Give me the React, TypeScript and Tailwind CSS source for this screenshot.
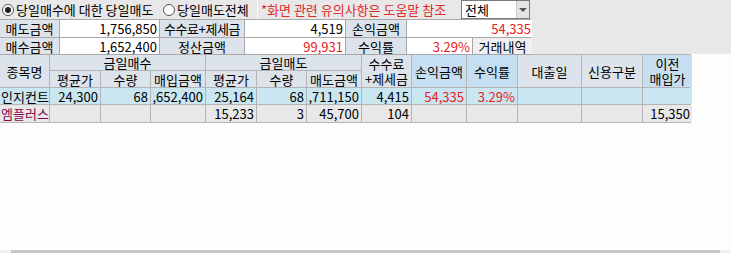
import React from "react";

const F = { fontFamily: '"Noto Sans CJK KR", "Noto Sans", sans-serif' };

function Radio({ checked, label }: { checked?: boolean; label: string }) {
  return (
    <div className="flex items-center gap-[2px] h-full">
      <span className="w-[12px] h-[12px] rounded-full border border-[#555] bg-white flex items-center justify-center shrink-0">
        {checked && <span className="w-[6px] h-[6px] rounded-full bg-[#222]" />}
      </span>
      <span className="text-[13px] leading-none text-black whitespace-nowrap">{label}</span>
    </div>
  );
}

const headBase = "bg-[#dce3eb] flex items-center justify-center text-[13px] leading-[15px] text-black text-center whitespace-nowrap";
const headBlue = "bg-[#c6def1] flex items-center justify-center text-[13px] leading-[15px] text-black text-center whitespace-nowrap";
const c1 = "bg-[#c9e6f1] flex items-center justify-end pr-[2px] whitespace-nowrap overflow-hidden";
const c2 = "bg-[#e8e8e8] flex items-center justify-end pr-[2px] whitespace-nowrap overflow-hidden";

export default function App() {
  return (
    <div style={F} className="w-[731px] h-[253px] bg-[#fdfdfe] relative overflow-hidden">
      {/* top area */}
      <div className="bg-[#e8e8e8] h-[54px] flex flex-col">
        <div className="h-[19px] flex items-center">
          <div className="w-[163px] pl-[2px] h-full"><Radio checked label="당일매수에 대한 당일매도" /></div>
          <div className="w-[94px] h-full"><Radio label="당일매도전체" /></div>
          <div className="w-[204px] h-[19px] border-l border-white flex items-center pl-[3px] text-[13px] text-[#e02a2a] leading-none whitespace-nowrap">
            *화면 관련 유의사항은 도움말 참조
          </div>
          <div className="w-[69px] h-[19px] border border-[#7a7a7a] bg-white flex">
            <div className="flex-1 flex items-center pl-[3px] text-[13px] leading-none">전체</div>
            <div className="w-[13px] bg-[#e4e4e4] border-l border-[#c8c8c8] flex items-center justify-center">
              <span className="w-0 h-0 border-l-[4px] border-r-[4px] border-t-[4px] border-l-transparent border-r-transparent border-t-[#555]" />
            </div>
          </div>
        </div>
        <div className="w-[531px] border-t border-[#a8a8a8] grid grid-cols-[59px_99px_84px_100px_60px_125px] gap-x-px gap-y-px bg-[#a8a8a8] pr-px pb-px text-[13px] leading-none">
          <div className={headBase + " h-[17px]"}>매도금액</div>
          <div className="bg-white h-[17px] flex items-center justify-end pr-[2px]">1,756,850</div>
          <div className={headBase + " h-[17px] tracking-[-0.4px]"}>수수료+제세금</div>
          <div className="bg-white h-[17px] flex items-center justify-end pr-[2px]">4,519</div>
          <div className={headBase + " h-[17px]"}>손익금액</div>
          <div className="bg-white h-[17px] flex items-center justify-end pr-[1px] text-[#e82020]">54,335</div>
          <div className={headBase + " h-[16px]"}>매수금액</div>
          <div className="bg-white h-[16px] flex items-center justify-end pr-[2px]">1,652,400</div>
          <div className={headBase + " h-[16px]"}>정산금액</div>
          <div className="bg-white h-[16px] flex items-center justify-end pr-[2px] text-[#e82020]">99,931</div>
          <div className={headBase + " h-[16px]"}>수익률</div>
          <div className="bg-white h-[16px] flex">
            <div className="flex-1 flex items-center justify-end pr-[2px] text-[#e82020]">3.29%</div>
            <div className="w-[60px] bg-[#f0f0f0] border-l border-[#a8a8a8] flex items-center justify-center">거래내역</div>
          </div>
        </div>
      </div>

      {/* table */}
      <div className="w-[691px] grid grid-cols-[49px_50px_49px_54px_50px_49px_54px_49px_54px_50px_63px_60px_49px] grid-rows-[15px_16px_16px_17px] gap-px bg-[#b4b4b4] pt-px pr-px pb-px text-[13px] leading-none">
        <div className={headBase + " row-span-2"}>종목명</div>
        <div className={headBase + " col-span-3"}>금일매수</div>
        <div className={headBase + " col-span-3"}>금일매도</div>
        <div className={headBase + " row-span-2 flex-col"}><span>수수료</span><span>+제세금</span></div>
        <div className={headBlue + " row-span-2"}>손익금액</div>
        <div className={headBlue + " row-span-2"}>수익률</div>
        <div className={headBase + " row-span-2"}>대출일</div>
        <div className={headBase + " row-span-2"}>신용구분</div>
        <div className={headBlue + " row-span-2 flex-col"}><span>이전</span><span>매입가</span></div>
        <div className={headBase}>평균가</div>
        <div className={headBase}>수량</div>
        <div className={headBase}>매입금액</div>
        <div className={headBase}>평균가</div>
        <div className={headBase}>수량</div>
        <div className={headBase}>매도금액</div>

        {/* row 1 */}
        <div className="bg-[#c9e6f1] flex items-center pl-[1px] whitespace-nowrap">인지컨트</div>
        <div className={c1}>24,300</div>
        <div className={c1}>68</div>
        <div className={c1}>,652,400</div>
        <div className={c1}>25,164</div>
        <div className={c1}>68</div>
        <div className={c1}>,711,150</div>
        <div className={c1}>4,415</div>
        <div className={c1 + " text-[#e82020]"}>54,335</div>
        <div className={c1 + " text-[#e82020]"}>3.29%</div>
        <div className="bg-[#c9e6f1]" />
        <div className="bg-[#c9e6f1]" />
        <div className="bg-[#c9e6f1]" />

        {/* row 2 */}
        <div className="bg-[#e8e8e8] flex items-center pl-[1px] text-[#8a0a4a] whitespace-nowrap">엠플러스</div>
        <div className="bg-[#e8e8e8]" />
        <div className="bg-[#e8e8e8]" />
        <div className="bg-[#e8e8e8]" />
        <div className={c2}>15,233</div>
        <div className={c2}>3</div>
        <div className={c2}>45,700</div>
        <div className={c2}>104</div>
        <div className="bg-[#e8e8e8]" />
        <div className="bg-[#e8e8e8]" />
        <div className="bg-[#e8e8e8]" />
        <div className="bg-[#e8e8e8]" />
        <div className={c2}>15,350</div>
      </div>

      {/* bottom scrollbar */}
      <div className="absolute left-0 right-0 bottom-0 h-[3px] bg-[#f0f0f0] flex">
        <div className="ml-[11px] mr-[11px] flex-1 bg-[#c8c8c8]" />
      </div>
    </div>
  );
}
